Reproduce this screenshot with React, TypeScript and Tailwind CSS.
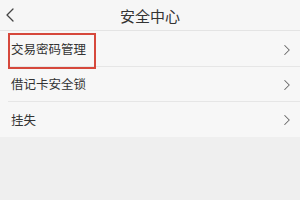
import { ChevronLeft, ChevronRight } from 'lucide-react';

const items = ['交易密码管理', '借记卡安全锁', '挂失'];

export default function App() {
  return (
    <div
      className="w-[300px] h-[200px] bg-[#efefef] overflow-hidden text-[#333]"
      style={{ fontFamily: '"Noto Sans CJK SC", "Noto Sans", sans-serif' }}
    >
      <div className="relative h-[31px] flex items-center justify-center bg-[#f6f6f6] border-b border-[#e4e4e4]">
        <ChevronLeft className="absolute left-[-2px] top-[3px] w-6 h-6 text-[#444]" strokeWidth={1.3} />
        <span className="text-[15px] leading-none">安全中心</span>
      </div>
      <div className="bg-[#f7f7f7] pt-[1px]">
        {items.map((t, i) => (
          <div key={t} className="relative h-[35px] ml-2 flex items-center pt-[1px] pr-[4px] border-b border-[#e6e6e6] last:border-b-0">
            <span className="text-[12.5px] leading-none ml-[3px]">{t}</span>
            <ChevronRight className="ml-auto w-[18px] h-[18px] text-[#666]" strokeWidth={1.4} />
            {i === 0 && (
              <div className="absolute left-0 top-[1px] w-[88px] h-[36px] border-2 border-[#d6483c]" />
            )}
          </div>
        ))}
      </div>
    </div>
  );
}
